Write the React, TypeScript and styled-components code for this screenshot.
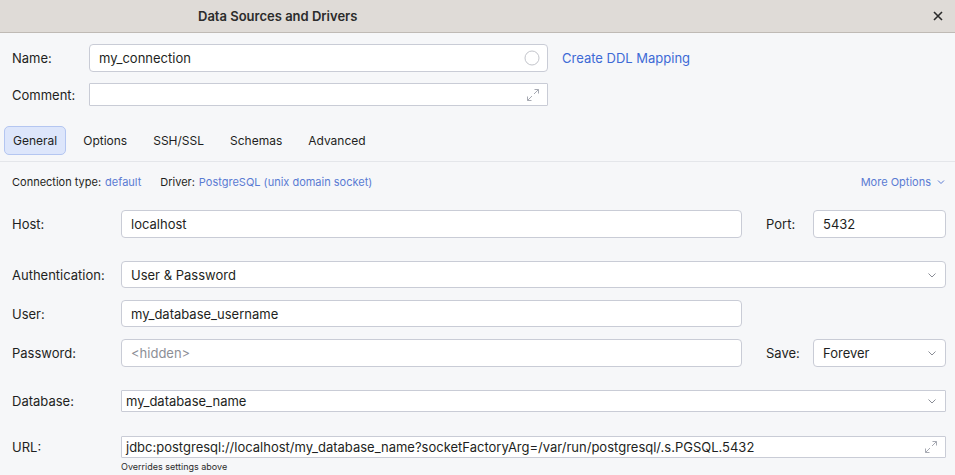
import React from 'react';
import styled, { createGlobalStyle } from 'styled-components';

const GlobalStyle = createGlobalStyle`
  html, body {
    margin: 0;
    padding: 0;
    background: #f6f7f9;
  }
  body {
    font-family: Inter, "Noto Sans", "Liberation Sans", sans-serif;
    color: #1e1f22;
  }
`;

const Dialog = styled.div`
  width: 955px;
  height: 475px;
  overflow: hidden;
  background: #f6f7f9;
  display: flex;
  flex-direction: column;
`;

const TitleBar = styled.div`
  height: 32px;
  flex: none;
  background: #dfdbd7;
  border-bottom: 1px solid #bfbab5;
  display: flex;
  align-items: center;
  justify-content: space-between;
  padding: 0 6px 0 198px;
`;

const Title = styled.div`
  font-size: 13px;
  font-weight: 600;
  color: #2b2b2b;
`;

const CloseButton = styled.button`
  width: 22px;
  height: 22px;
  border: none;
  background: transparent;
  display: flex;
  align-items: center;
  justify-content: center;
  padding: 0;
`;

const Top = styled.div`
  padding: 11px 9px 0 12px;
  display: flex;
  flex-direction: column;
  gap: 11px;
`;

const TopRow = styled.div`
  display: flex;
  align-items: center;
`;

const TopLabel = styled.div`
  width: 77px;
  flex: none;
  font-size: 13px;
`;

const Input = styled.div<{ $h?: number; $square?: boolean; $w?: number }>`
  position: relative;
  height: ${(p) => p.$h ?? 28}px;
  ${(p) => (p.$w ? `width: ${p.$w}px; flex: none;` : 'flex: 1;')}
  box-sizing: border-box;
  background: #ffffff;
  border: 1px solid #c9ccd6;
  border-radius: ${(p) => (p.$square ? '1px' : '4px')};
  display: flex;
  align-items: center;
  padding: 0 ${(p) => (p.$square ? '4px' : '9px')};
  font-size: 13px;
  color: #1e1f22;
  white-space: nowrap;
`;

const Placeholder = styled.span`
  color: #8c8f96;
`;

const InputIcon = styled.span`
  position: absolute;
  right: 7px;
  top: 50%;
  transform: translateY(-50%);
  display: flex;
`;

const LinkText = styled.a<{ $size?: number }>`
  color: ${(p) => ((p.$size ?? 13) < 12 ? '#5a7bd3' : '#3d6ad6')};
  font-size: ${(p) => p.$size ?? 13}px;
  text-decoration: none;
  cursor: pointer;
  display: inline-flex;
  align-items: center;
  gap: 5px;
`;

const Tabs = styled.div`
  margin: 20px 0 0 4px;
  display: flex;
  gap: 8px;
`;

const Tab = styled.div<{ $active?: boolean }>`
  height: 29px;
  box-sizing: border-box;
  padding: 0 8px;
  display: flex;
  align-items: center;
  font-size: 12px;
  border-radius: 5px;
  background: ${(p) => (p.$active ? '#dde6fb' : 'transparent')};
  border: 1px solid ${(p) => (p.$active ? '#b4c6f1' : 'transparent')};
`;

const Separator = styled.div`
  margin-top: 6px;
  height: 1px;
  background: #e4e6ea;
`;

const InfoRow = styled.div`
  margin-top: 10px;
  height: 20px;
  padding: 0 9px 0 12px;
  display: flex;
  align-items: center;
  font-size: 11px;
`;

const InfoLabel = styled.span`
  margin-right: 4px;
  color: #1e1f22;
`;

const InfoGroup = styled.div`
  display: flex;
  align-items: center;
  margin-right: 19px;
`;

const Spacer = styled.div`
  flex: 1;
`;

const Form = styled.div`
  padding: 18px 9px 0 12px;
  display: flex;
  flex-direction: column;
`;

const Row = styled.div<{ $gap: number }>`
  margin-top: ${(p) => p.$gap}px;
  display: flex;
  align-items: center;
`;

const Label = styled.div`
  width: 109px;
  flex: none;
  font-size: 13px;
`;

const SideLabel = styled.div`
  width: 47px;
  flex: none;
  margin-left: 24px;
  font-size: 13px;
`;

const Note = styled.div`
  margin: 3px 0 0 109px;
  font-size: 9px;
  color: #2b2b2b;
`;

const Chevron = () => (
  <svg width="12" height="12" viewBox="0 0 12 12">
    <path d="M2.5 4.5 L6 8 L9.5 4.5" fill="none" stroke="#8a8d96" strokeWidth="1" />
  </svg>
);

const Expand = () => (
  <svg width="14" height="14" viewBox="0 0 14 14" fill="none" stroke="#a7aab3" strokeWidth="1">
    <path d="M8 6 L12.5 1.5 M8.5 1.5 H12.5 V5.5" />
    <path d="M6 8 L1.5 12.5 M1.5 8.5 V12.5 H5.5" />
  </svg>
);

const Circle = () => (
  <svg width="16" height="16" viewBox="0 0 16 16">
    <circle cx="8" cy="8" r="7" fill="#fff" stroke="#c3c5cb" strokeWidth="1" />
  </svg>
);

const Close = () => (
  <svg width="10" height="10" viewBox="0 0 10 10">
    <path d="M1 1 L9 9 M9 1 L1 9" stroke="#2a2a2a" strokeWidth="1.6" />
  </svg>
);

const SmallChevron = () => (
  <svg width="10" height="10" viewBox="0 0 10 10">
    <path d="M2 3.5 L5 6.5 L8 3.5" fill="none" stroke="#5a7bd3" strokeWidth="1" />
  </svg>
);

export default function App() {
  return (
    <>
      <GlobalStyle />
      <Dialog>
        <TitleBar>
          <Title>Data Sources and Drivers</Title>
          <CloseButton>
            <Close />
          </CloseButton>
        </TitleBar>

        <Top>
          <TopRow>
            <TopLabel>Name:</TopLabel>
            <Input $w={459}>
              my_connection
              <InputIcon>
                <Circle />
              </InputIcon>
            </Input>
            <LinkText style={{ marginLeft: 14 }}>Create DDL Mapping</LinkText>
          </TopRow>
          <TopRow>
            <TopLabel>Comment:</TopLabel>
            <Input $w={459} $h={23} $square>
              <InputIcon>
                <Expand />
              </InputIcon>
            </Input>
          </TopRow>
        </Top>

        <Tabs>
          <Tab $active>General</Tab>
          <Tab>Options</Tab>
          <Tab>SSH/SSL</Tab>
          <Tab>Schemas</Tab>
          <Tab>Advanced</Tab>
        </Tabs>
        <Separator />

        <InfoRow>
          <InfoGroup>
            <InfoLabel>Connection type:</InfoLabel>
            <LinkText $size={11}>default</LinkText>
          </InfoGroup>
          <InfoGroup>
            <InfoLabel>Driver:</InfoLabel>
            <LinkText $size={11}>PostgreSQL (unix domain socket)</LinkText>
          </InfoGroup>
          <Spacer />
          <LinkText $size={11}>
            More Options
            <SmallChevron />
          </LinkText>
        </InfoRow>

        <Form>
          <Row $gap={0}>
            <Label>Host:</Label>
            <Input>localhost</Input>
            <SideLabel>Port:</SideLabel>
            <Input $w={133}>5432</Input>
          </Row>
          <Row $gap={23}>
            <Label>Authentication:</Label>
            <Input $h={27}>
              User &amp; Password
              <InputIcon>
                <Chevron />
              </InputIcon>
            </Input>
          </Row>
          <Row $gap={12}>
            <Label>User:</Label>
            <Input $w={621} $h={27}>my_database_username</Input>
          </Row>
          <Row $gap={12}>
            <Label>Password:</Label>
            <Input>
              <Placeholder>&lt;hidden&gt;</Placeholder>
            </Input>
            <SideLabel>Save:</SideLabel>
            <Input $w={133}>
              Forever
              <InputIcon>
                <Chevron />
              </InputIcon>
            </Input>
          </Row>
          <Row $gap={23}>
            <Label>Database:</Label>
            <Input $h={22} $square>
              my_database_name
              <InputIcon>
                <Chevron />
              </InputIcon>
            </Input>
          </Row>
          <Row $gap={24}>
            <Label>URL:</Label>
            <Input $h={22} $square>
              jdbc:postgresql://localhost/my_database_name?socketFactoryArg=/var/run/postgresql/.s.PGSQL.5432
              <InputIcon>
                <Expand />
              </InputIcon>
            </Input>
          </Row>
          <Note>Overrides settings above</Note>
        </Form>
      </Dialog>
    </>
  );
}
